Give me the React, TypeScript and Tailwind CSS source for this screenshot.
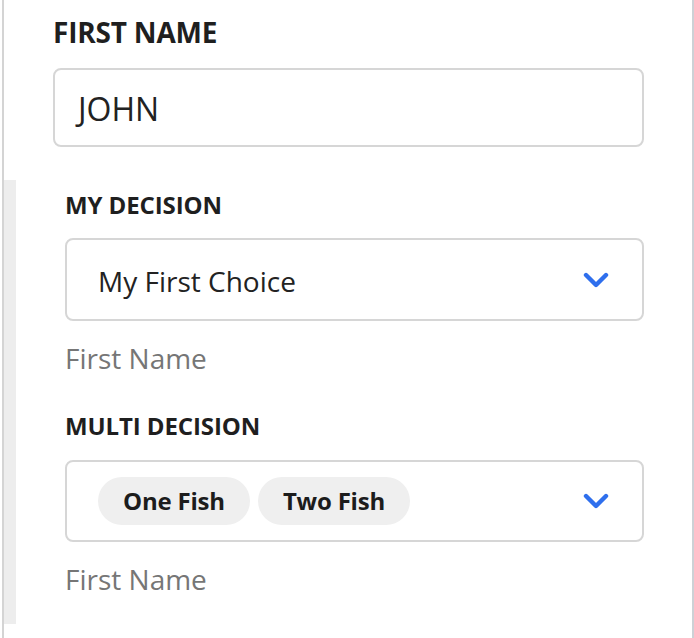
import React from "react";

function Chevron() {
  return (
    <svg width="26" height="17" viewBox="0 0 26 17" fill="none" className="shrink-0">
      <path d="M3 3 L13 13 L23 3" stroke="#2f6fed" strokeWidth="4.4" strokeLinecap="round" strokeLinejoin="round" />
    </svg>
  );
}

function Chip({ children }: { children: React.ReactNode }) {
  return (
    <span className="flex h-[48px] items-center rounded-full bg-[#efefef] px-[25px] text-[24px] font-bold leading-none tracking-[-0.2px] text-[#1c1c1c]">
      {children}
    </span>
  );
}

export default function App() {
  return (
    <div className="h-[638px] w-[694px] bg-white" style={{ fontFamily: '"Open Sans", "Noto Sans", sans-serif' }}>
      <div className="ml-[2px] h-[638px] w-[692px] border-l-2 border-r-2 border-l-[#d4d4d4] border-r-[#cdd1d6]">
        <div className="pl-[49px] pr-[48px] pt-[13px]">
          <div className="text-[28px] font-bold leading-[38px] tracking-[-0.2px] text-[#1f1f1f]">FIRST NAME</div>
          <div className="mt-[17px] flex h-[79px] items-center rounded-[8px] border-2 border-[#d6d6d6] pl-[23px] pt-[2px] text-[32px] leading-[44px] text-[#222]">
            JOHN
          </div>
        </div>
        <div className="mt-[33px] border-l-[12px] border-l-[#ededed] pb-[26px] pl-[49px] pr-[48px] pt-[8px]">
          <div className="text-[24px] font-bold leading-[33px] tracking-[-0.1px] text-[#1f1f1f]">MY DECISION</div>
          <div className="mt-[17px] flex h-[83px] items-center justify-between rounded-[8px] border-2 border-[#d6d6d6] pl-[31px] pr-[33px] pt-[2px]">
            <span className="text-[28px] leading-[38px] text-[#222]">My First Choice</span>
            <Chevron />
          </div>
          <div className="mt-[18px] text-[28px] leading-[38px] text-[#767676]">First Name</div>
          <div className="mt-[32px] text-[24px] font-bold leading-[33px] tracking-[-0.1px] text-[#1f1f1f]">MULTI DECISION</div>
          <div className="mt-[18px] flex h-[82px] items-center justify-between rounded-[8px] border-2 border-[#d6d6d6] pl-[31px] pr-[33px]">
            <div className="flex gap-[8px]">
              <Chip>One Fish</Chip>
              <Chip>Two Fish</Chip>
            </div>
            <Chevron />
          </div>
          <div className="mt-[18px] text-[28px] leading-[38px] text-[#767676]">First Name</div>
        </div>
      </div>
    </div>
  );
}
